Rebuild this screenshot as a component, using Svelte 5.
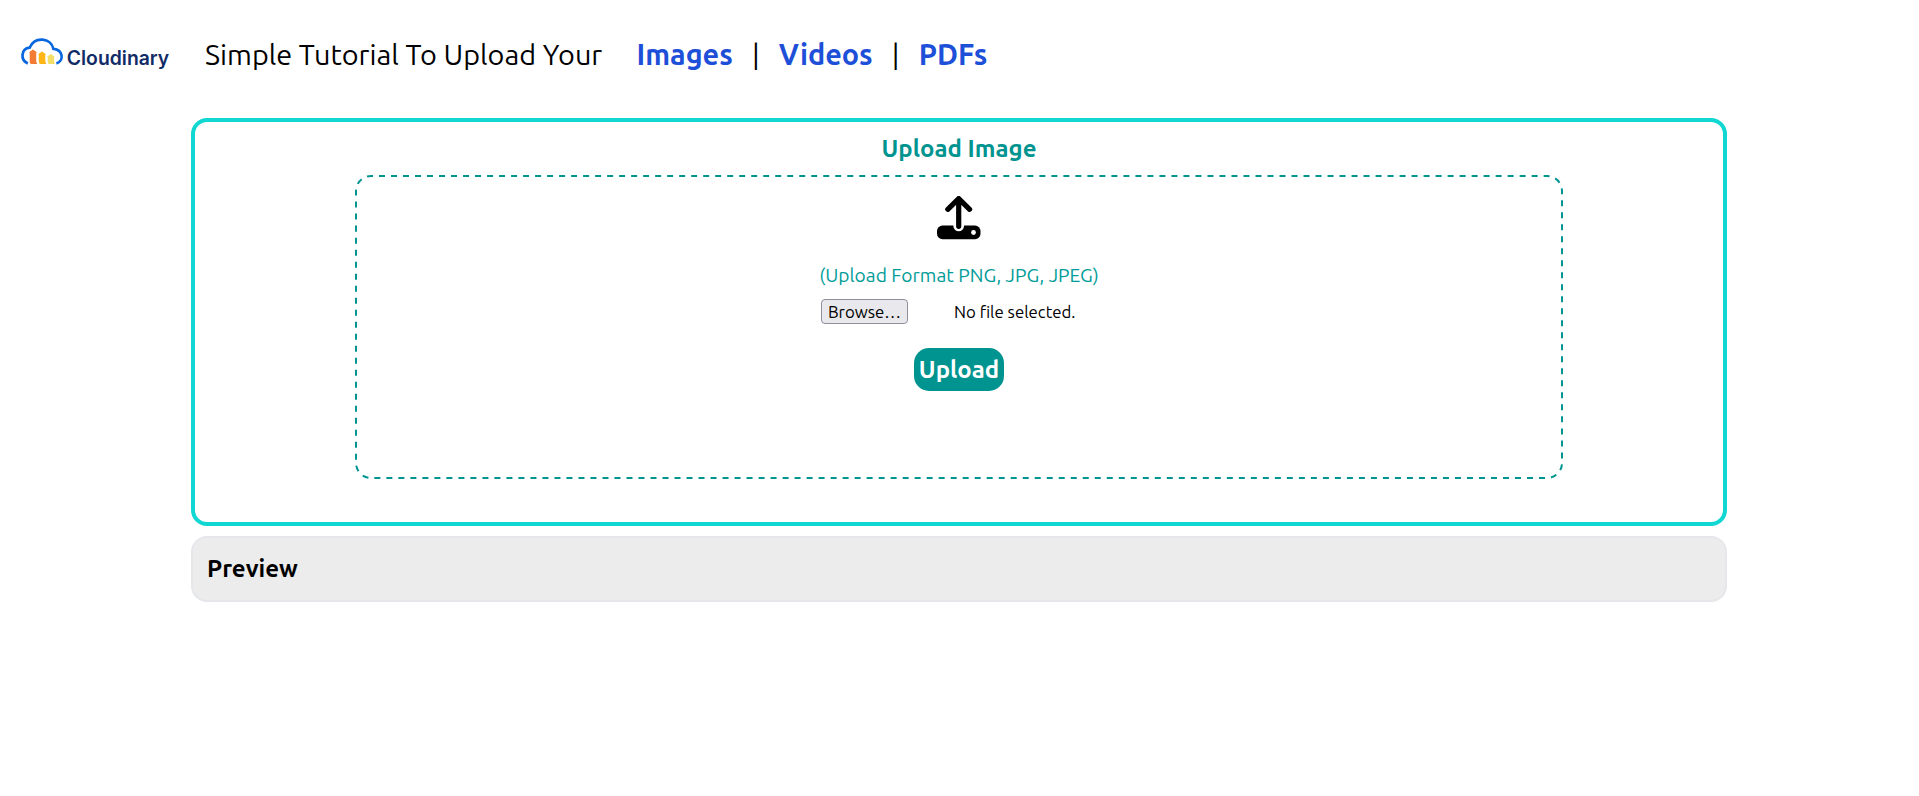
<script>
  const links = ['Images', 'Videos', 'PDFs'];
</script>

<header>
  <svg class="logo" viewBox="0 0 150 36" role="img" aria-label="Cloudinary">
    <path d="M7.8 27.4C-.2 23.7 1.2 12.8 9.6 11.7C15 -.3 31 2 33.4 12.8C43 13.8 44.6 24.5 36.4 27.4" fill="none" stroke="#0867df" stroke-width="2.7" />
    <path d="M8.7 16.6l4.2-3.2 4.3 3.2h-1v8.9l1 2.5h-6.4q-1.1-1-1.1-2.5v-8.9z" fill="#f27b35" />
    <path d="M17.8 18.6l4.2-3.2 4.3 3.2h-1v7l1 2.4h-6.4q-1.1-1-1.1-2.4v-7z" fill="#ffb515" />
    <path d="M26.7 20.9l4.1-3 4.3 3h-1v4.8l1 2.3h-6.3q-1.1-1-1.1-2.3v-4.8z" fill="#f4df66" />
    <text x="46.8" y="28.6" textLength="102.4" lengthAdjust="spacingAndGlyphs">Cloudinary</text>
  </svg>
  <h1>Simple Tutorial To Upload Your</h1>
  <nav>
    {#each links as link, i}
      {#if i}<span class="bar">|</span>{/if}
      <a href={'#' + link}>{link}</a>
    {/each}
  </nav>
</header>

<main>
  <section class="card">
    <h2>Upload Image</h2>
    <div class="drop">
      <svg class="outline" viewBox="0 0 1208 304" aria-hidden="true">
        <rect x="1" y="1" width="1206" height="302" rx="15" pathLength="2988" />
      </svg>
      <svg class="icon" viewBox="0 0 44 44" aria-hidden="true">
        <rect x="0" y="29.6" width="43.5" height="13.6" rx="5.5" />
        <path d="M21.7 5v25" stroke="#fff" stroke-width="10.6" stroke-linecap="round" />
        <path d="M21.7 3v27.3M10.8 13.3L21.7 2.6l10.9 10.7" fill="none" stroke="#000" stroke-width="5.2" stroke-linecap="round" stroke-linejoin="round" />
        <circle cx="36.5" cy="36.5" r="2.4" fill="#fff" />
      </svg>
      <p>(Upload Format PNG, JPG, JPEG)</p>
      <div class="file">
        <button class="browse">Browse…</button>
        <span>No file selected.</span>
      </div>
      <button class="upload">Upload</button>
    </div>
  </section>
  <section class="preview"><h2>Preview</h2></section>
</main>

<style>
  :global(body) { background: #fff; font-family: Ubuntu, "Noto Sans", sans-serif; }
  * { box-sizing: border-box; }
  h1, h2, p { margin: 0; white-space: nowrap; }
  header { height: 118px; padding: 36px 20px 0; display: flex; align-items: flex-start; }
  .logo { width: 150px; height: 36px; flex: none; overflow: visible; }
  .logo text { font: 600 20px Inter, sans-serif; fill: #112b66; }
  h1 { width: 466.5px; padding-left: 35px; font-size: 28.8px; font-weight: 400; line-height: 36px; }
  nav { display: flex; line-height: 36px; font-size: 28.8px; }
  nav a { color: #1d4fd8; font-weight: 600; text-decoration: none; white-space: nowrap; }
  .bar { width: 46px; text-align: center; color: #000; }
  main { width: 1536px; margin-left: 191px; }
  .card { height: 408px; border: 4px solid #10d7d1; border-radius: 16px; display: flex; flex-direction: column; align-items: center; }
  h2 { font-size: 24px; font-weight: 600; line-height: 32px; }
  .card h2 { height: 53px; padding-top: 11px; color: #009490; }
  .drop { position: relative; width: 1208px; height: 304px; padding-top: 21px; display: flex; flex-direction: column; align-items: center; }
  .outline { position: absolute; inset: 0; width: 1208px; height: 304px; pointer-events: none; }
  .outline rect { fill: none; stroke: #009490; stroke-width: 2px; stroke-dasharray: 6 6; stroke-dashoffset: 4; }
  .icon { width: 44px; height: 44px; flex: none; }
  .drop p { height: 28px; margin-top: 21px; color: #009c98; font-size: 19.2px; line-height: 28px; }
  .file { width: 276px; height: 25px; margin-top: 10px; display: flex; align-items: center; font-size: 16.8px; }
  .browse { width: 87px; height: 25px; padding: 0; border: 1px solid #8f8f9d; border-radius: 4px; background: #e9e9ed; font: inherit; line-height: 21px; color: #000; }
  .file span { margin-left: 46px; white-space: nowrap; }
  .upload { width: 90px; height: 43px; margin-top: 24px; padding: 0; border: 0; border-radius: 15px; background: #009490; color: #fff; font: 600 24px Ubuntu, "Noto Sans", sans-serif; }
  .preview { height: 66px; margin-top: 10px; padding: 15px 14px; border: 2px solid #e5e7eb; border-radius: 16px; background: #ececec; }
</style>
